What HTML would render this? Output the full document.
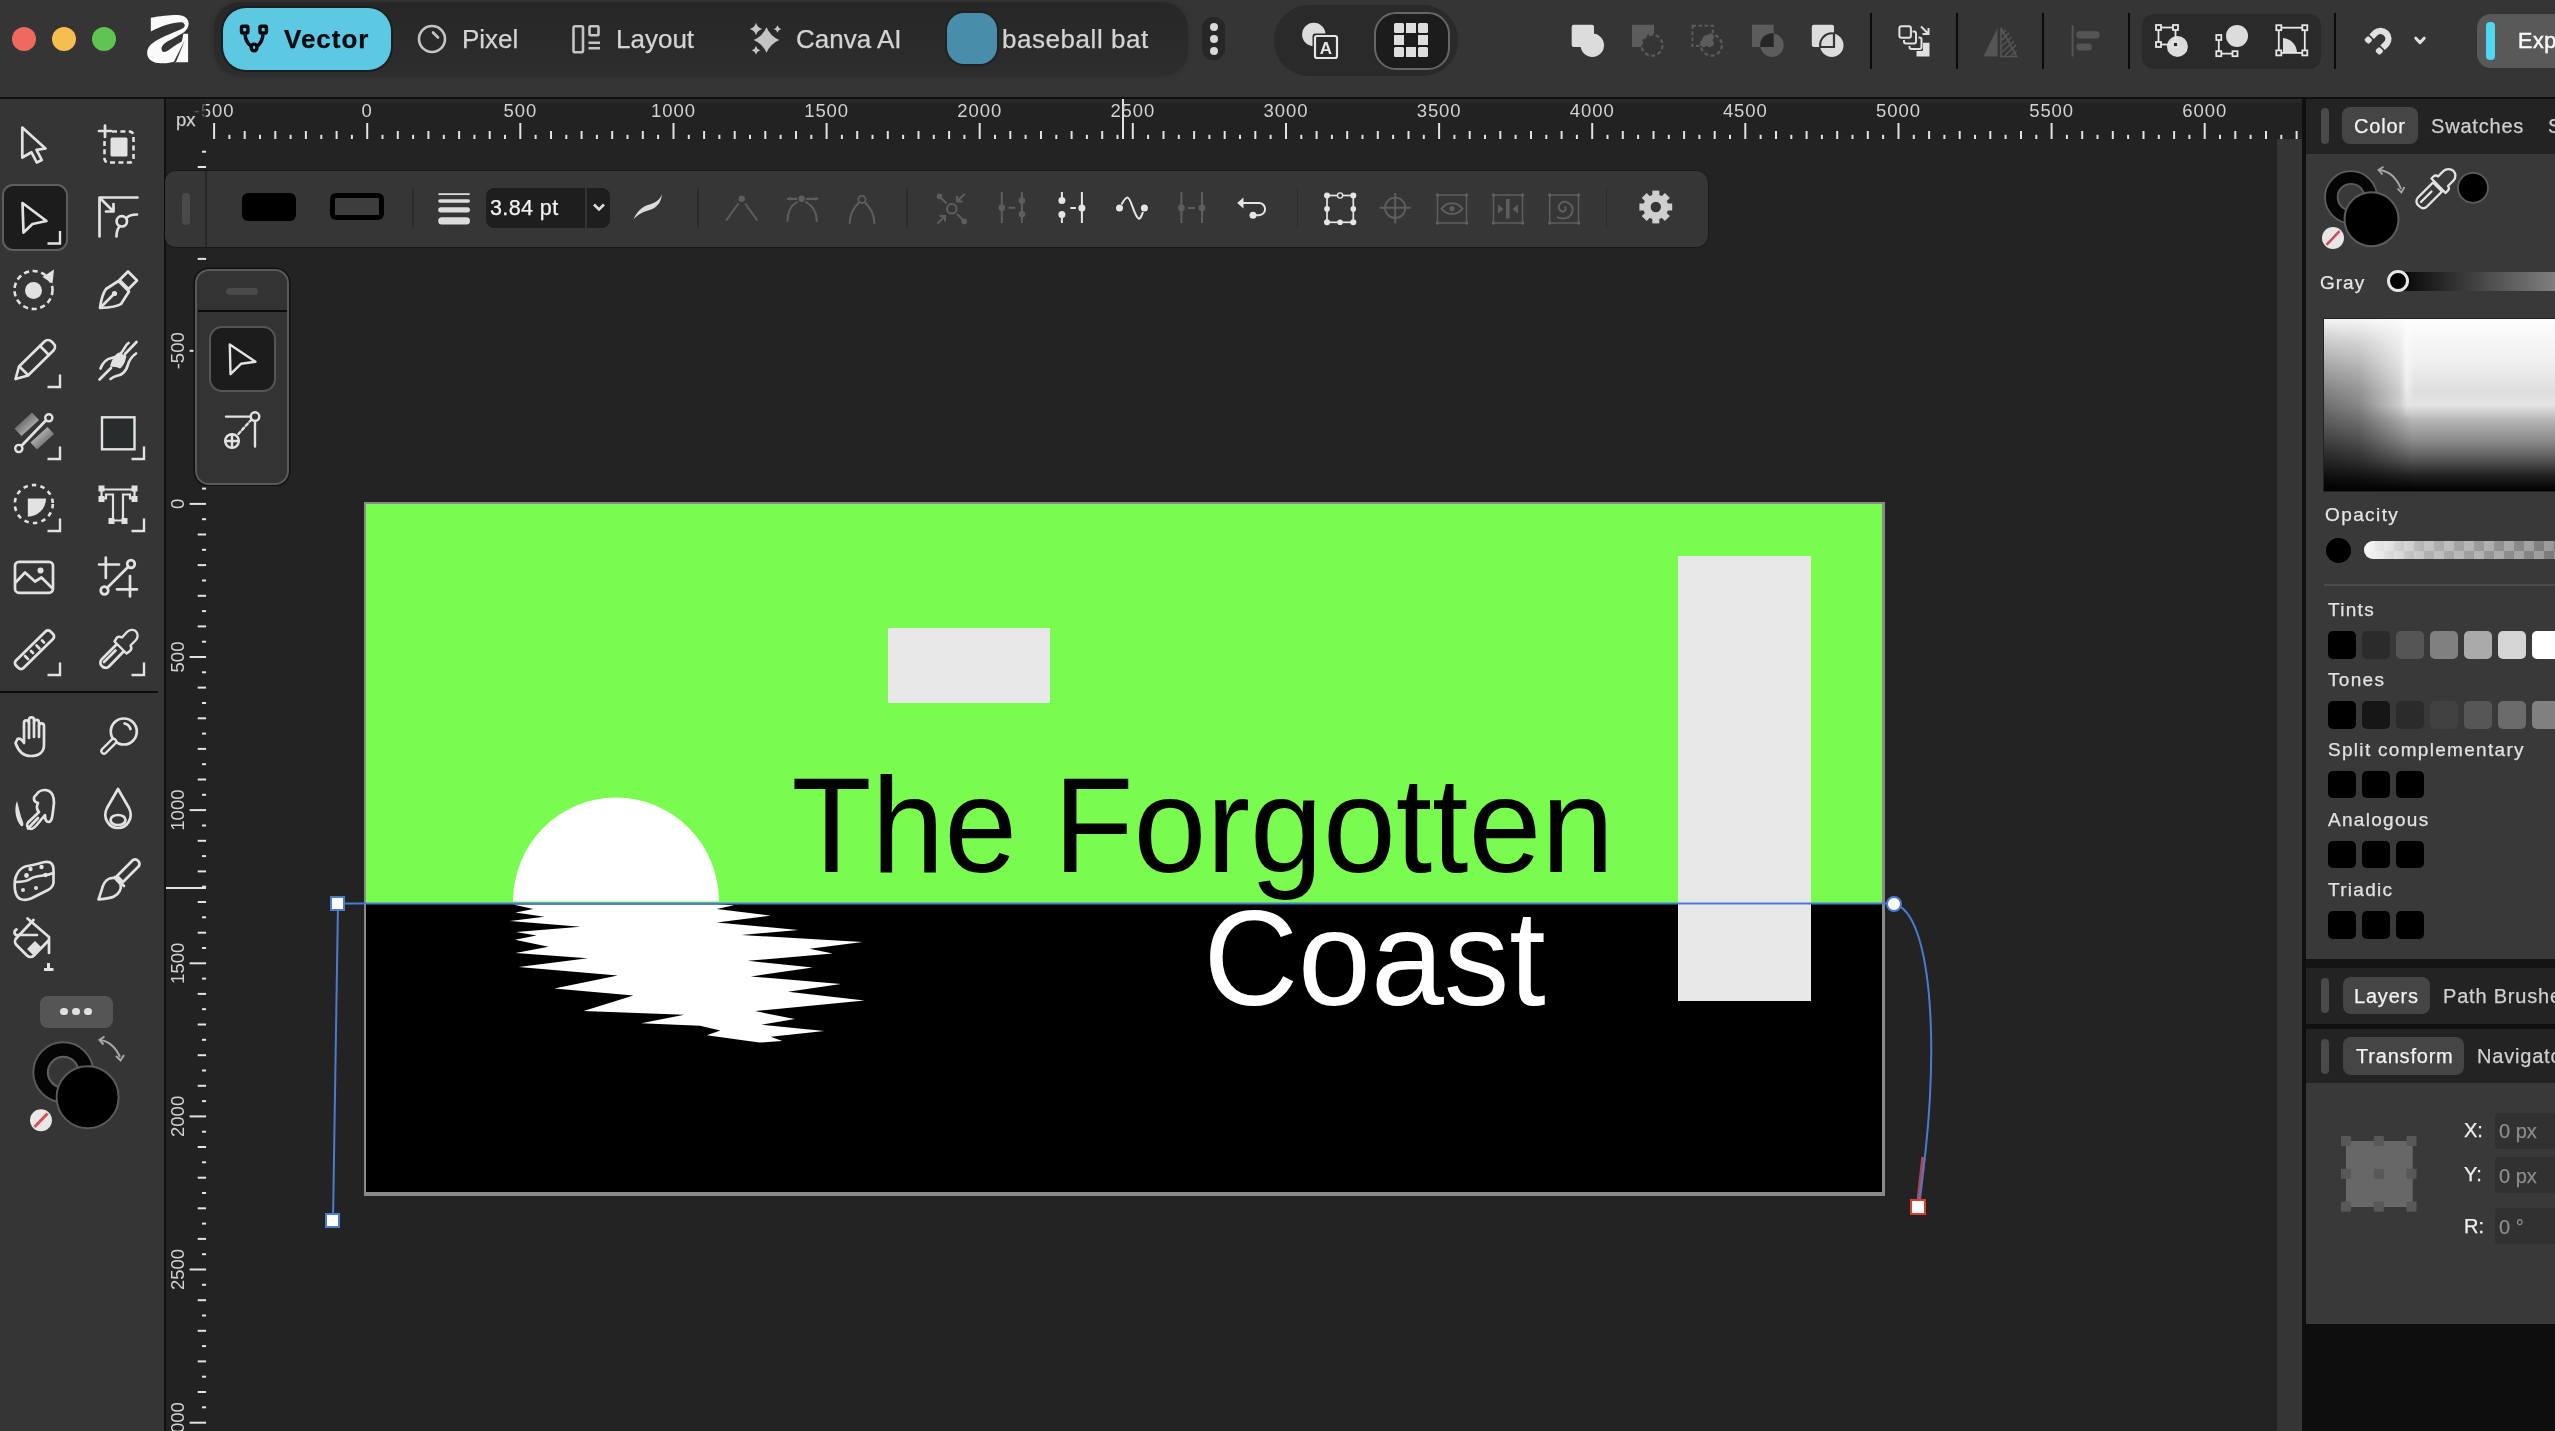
<!DOCTYPE html>
<html><head><meta charset="utf-8"><style>
*{margin:0;padding:0;box-sizing:border-box}
html,body{width:2555px;height:1431px;overflow:hidden;background:#232323;font-family:"Liberation Sans",sans-serif}
.a{position:absolute}
.t{position:absolute;white-space:nowrap;line-height:1;-webkit-text-stroke:0.25px currentColor;will-change:transform}
svg{position:absolute;overflow:visible;will-change:transform}
</style></head><body>
<div class="a" style="left:0px;top:0px;width:2555px;height:97px;background:#353535"></div>
<div class="a" style="left:0px;top:97px;width:2555px;height:2px;background:#101010"></div>
<div class="a" style="left:0px;top:99px;width:164px;height:1332px;background:#353535"></div>
<div class="a" style="left:164px;top:99px;width:2px;height:1332px;background:#111"></div>
<div class="a" style="left:166px;top:99px;width:2136px;height:42px;background:#222"></div>
<div class="a" style="left:166px;top:141px;width:44px;height:1290px;background:#222"></div>
<div class="a" style="left:214px;top:2px;width:974px;height:74px;background:linear-gradient(#272727,#2d2d2d);border-radius:26px;box-shadow:0 0 5px rgba(0,0,0,0.18)"></div>
<div class="a" style="left:12px;top:27px;width:24px;height:24px;background:#ee6a5f;border-radius:50%"></div>
<div class="a" style="left:52px;top:27px;width:24px;height:24px;background:#f5be4f;border-radius:50%"></div>
<div class="a" style="left:92px;top:27px;width:24px;height:24px;background:#5fc453;border-radius:50%"></div>
<svg style="left:140px;top:8px;" width="60" height="62" viewBox="0 0 60 62"><g transform="scale(0.04333)">
<path d="M250,225 C500,175 800,150 920,165 C1080,185 1140,300 1120,400 C1100,490 1040,545 990,575 C900,625 760,700 640,770 C540,830 480,900 500,970 C520,1040 600,1030 680,960 C800,870 920,800 1030,740 C960,900 860,1080 790,1235 C700,1270 560,1290 420,1270 C250,1250 160,1140 165,1030 C170,900 260,820 400,740 C600,630 850,540 990,470 C1060,430 1040,340 960,330 C800,320 500,400 250,545 Z" fill="#fafafa"/>
<path d="M1000,595 L1110,595 L1110,1250 L800,1250 C870,1100 950,900 1000,595 Z" fill="#fafafa"/>
<path d="M1030,740 C960,900 870,1080 790,1240 L830,1245 C900,1080 980,900 1030,740 Z" fill="#353535"/>
</g></svg>
<div class="a" style="left:221px;top:6px;width:172px;height:66px;background:#1e1e1e;border-radius:25px"></div>
<div class="a" style="left:223px;top:8px;width:168px;height:62px;background:#5cc8e2;border-radius:23px"></div>
<svg style="left:232px;top:18px;" width="48" height="42" viewBox="0 0 48 42"><g transform="translate(-232,-18)" fill="none" stroke="#0a0a10" stroke-width="3.4" stroke-linejoin="round">
<rect x="241.5" y="26.3" width="6.4" height="6.7" rx="1.2"/><rect x="260" y="26.3" width="6.4" height="6.7" rx="1.2"/>
<rect x="251.3" y="44.1" width="5.6" height="6.8" rx="2.8"/>
<path d="M245,34.5 C245.5,40 247.5,43.5 251,46 M263,34.5 C262.5,40 260.8,43.5 257.3,46"/></g></svg>
<div class="t" style="left:284px;top:26px;font-size:26px;color:#0a0a10;font-weight:bold;letter-spacing:1px">Vector</div>
<svg style="left:414px;top:21px;" width="36" height="36" viewBox="0 0 36 36"><circle cx="18" cy="18" r="13" fill="none" stroke="#c4c4c4" stroke-width="2.6"/><path d="M19,11.5 L24,16.5" stroke="#c4c4c4" stroke-width="2.6" stroke-linecap="round"/></svg>
<div class="t" style="left:462px;top:26px;font-size:26px;color:#d4d4d4;">Pixel</div>
<svg style="left:568px;top:21px;" width="36" height="36" viewBox="0 0 36 36"><g fill="none" stroke="#c4c4c4" stroke-width="2.6"><rect x="5.5" y="5.3" width="9.5" height="26" rx="1.5"/><rect x="21.5" y="5.3" width="9" height="9" rx="1"/></g><path d="M20.5,21.7 H32 M20.5,27.2 H32" stroke="#c4c4c4" stroke-width="2.6"/></svg>
<div class="t" style="left:616px;top:26px;font-size:26px;color:#d4d4d4;">Layout</div>
<svg style="left:744px;top:14px;" width="42" height="46" viewBox="0 0 42 46"><g transform="translate(-744,-14)" fill="#c4c4c4"><path d="M766.5,27.2 Q770.34,36.16 779.3,40 Q770.34,43.84 766.5,52.8 Q762.66,43.84 753.7,40 Q762.66,36.16 766.5,27.2 Z"/><path d="M756,22.8 Q757.364,27.636 762.2,29 Q757.364,30.364 756,35.2 Q754.636,30.364 749.8,29 Q754.636,27.636 756,22.8 Z"/><path d="M777.5,25.2 Q778.336,28.164 781.3,29 Q778.336,29.836 777.5,32.8 Q776.664,29.836 773.7,29 Q776.664,28.164 777.5,25.2 Z"/><path d="M756,46.0 Q756.946,49.354 760.3,50.3 Q756.946,51.245999999999995 756,54.599999999999994 Q755.054,51.245999999999995 751.7,50.3 Q755.054,49.354 756,46.0 Z"/></g></svg>
<div class="t" style="left:796px;top:26px;font-size:26px;color:#d4d4d4;">Canva AI</div>
<div class="a" style="left:945px;top:11px;width:54px;height:55px;background:#222;border-radius:19px"></div>
<div class="a" style="left:947px;top:13px;width:50px;height:51px;background:#488eaa;border-radius:17px"></div>
<div class="t" style="left:1002px;top:26px;font-size:26px;color:#d4d4d4;letter-spacing:0.55px">baseball bat</div>
<div class="a" style="left:1202px;top:17px;width:23px;height:43px;background:#272727;border-radius:11px"></div>
<div class="a" style="left:1209.6px;top:22.5px;width:8px;height:8px;background:#d8d8d8;border-radius:50%"></div>
<div class="a" style="left:1209.6px;top:34.7px;width:8px;height:8px;background:#d8d8d8;border-radius:50%"></div>
<div class="a" style="left:1209.6px;top:46.9px;width:8px;height:8px;background:#d8d8d8;border-radius:50%"></div>
<div class="a" style="left:1274px;top:5px;width:184px;height:71px;background:#2a2a2a;border-radius:35px"></div>
<svg style="left:1270px;top:0px;" width="80" height="80" viewBox="0 0 80 80"><g transform="translate(-1270,0)">
<circle cx="1313.8" cy="34.4" r="11.7" fill="#dcdcdc"/>
<rect x="1312.5" y="33.5" width="27" height="27" rx="3" fill="#2a2a2a"/>
<rect x="1315" y="36" width="22" height="22" rx="2" fill="#2a2a2a" stroke="#e6e6e6" stroke-width="2.2"/>
<text x="1326" y="54" font-family="Liberation Sans" font-size="17" font-weight="bold" fill="#e6e6e6" text-anchor="middle">A</text>
</g></svg>
<div class="a" style="left:1374px;top:12px;width:76px;height:58px;background:#1c1c1c;border:2px solid #666;border-radius:22px"></div>
<svg style="left:1390px;top:20px;" width="42" height="42" viewBox="0 0 42 42"><g transform="translate(-1390,-20)" fill="#dedede">
<rect x="1394" y="23" width="10" height="10" rx="1.5"/><rect x="1406" y="23" width="10" height="10"/><rect x="1418" y="23" width="10" height="10" rx="1.5"/>
<rect x="1394" y="35" width="10" height="10"/><rect x="1418" y="35" width="10" height="10"/>
<rect x="1394" y="47" width="10" height="10" rx="1.5"/><rect x="1406" y="47" width="10" height="10"/><rect x="1418" y="47" width="10" height="10" rx="1.5"/>
</g></svg>
<svg style="left:1560px;top:15px;" width="290" height="50" viewBox="0 0 290 50"><g transform="translate(-1560,-15)">
<rect x="1571.7" y="24.7" width="22.3" height="22.3" rx="2" fill="#dcdcdc"/><circle cx="1592.3" cy="45.2" r="11.7" fill="#dcdcdc"/>
<path d="M1632,24.7 H1654 V34 A11,11 0 0 0 1641.5,47 H1632 Z" fill="#5c5c5c"/>
<circle cx="1652" cy="45.2" r="10.5" fill="none" stroke="#5c5c5c" stroke-width="2.2" stroke-dasharray="4 2.6"/>
<rect x="1692.5" y="25.7" width="20.3" height="20.3" fill="none" stroke="#5c5c5c" stroke-width="2" stroke-dasharray="3.5 2.5"/>
<path d="M1712.8,34 V46 H1700.5 A11.5,11.5 0 0 1 1712.8,34 Z" fill="#5c5c5c"/>
<circle cx="1711.4" cy="45.2" r="10.5" fill="none" stroke="#5c5c5c" stroke-width="2.2" stroke-dasharray="4 2.6"/>
<rect x="1752" y="24.7" width="21.7" height="22.3" fill="#5c5c5c"/><circle cx="1772" cy="45.2" r="11.7" fill="#5c5c5c"/>
<path d="M1773.7,33.5 V47 H1760.3 A11.7,11.7 0 0 1 1773.7,33.5 Z" fill="#262626"/>
<rect x="1811.8" y="24.7" width="22.2" height="22.3" rx="2" fill="#dcdcdc"/><circle cx="1831.8" cy="45.2" r="11.7" fill="#dcdcdc"/>
<path d="M1820.3,47 A11.7,11.7 0 0 1 1834,33.5 V47 Z" fill="none" stroke="#353535" stroke-width="2.2"/>
</g></svg>
<div class="a" style="left:1870px;top:13px;width:2px;height:56px;background:#0a0a0a"></div>
<div class="a" style="left:1956px;top:13px;width:2px;height:56px;background:#0a0a0a"></div>
<div class="a" style="left:2042px;top:13px;width:2px;height:56px;background:#0a0a0a"></div>
<div class="a" style="left:2128px;top:13px;width:2px;height:56px;background:#0a0a0a"></div>
<div class="a" style="left:2334px;top:13px;width:2px;height:56px;background:#0a0a0a"></div>
<svg style="left:1890px;top:20px;" width="50" height="42" viewBox="0 0 50 42"><g transform="translate(-1890,-20)" fill="none" stroke="#e0e0e0" stroke-width="2">
<rect x="1899.4" y="26.3" width="11.5" height="11.5" rx="2"/>
<path d="M1912.5,31.5 h1.5 a2,2 0 0 1 2,2 v8 a2,2 0 0 1 -2,2 h-8 a2,2 0 0 1 -2,-2 v-1.5"/>
<path d="M1918.5,37.5 h1 a2,2 0 0 1 2,2 v7.5 a2,2 0 0 1 -2,2 h-8 a2,2 0 0 1 -2,-2 v-1"/>
<path d="M1921,26.5 L1928.5,34 M1928.5,28 V34 H1922.5"/>
</g>
<path d="M1916.5,56.5 H1929.5 V42.8 H1923 V49.5 A1.5,1.5 0 0 1 1921.5,51 H1916.5 Z" transform="translate(-1890,-20)" fill="#e0e0e0"/></svg>
<svg style="left:1980px;top:25px;" width="40" height="35" viewBox="0 0 40 35"><g transform="translate(-1980,-25)">
<path d="M1983.3,56.5 L1997.5,28 V56.5 Z" fill="#555"/>
<path d="M2001,28 L2016.7,56.5 H2001 Z" fill="none" stroke="#555" stroke-width="1.6"/>
<path d="M2002,34 L2006,30 M2002,40 L2009,33 M2002,46 L2011.5,37 M2002,52 L2014,41 M2005,55.5 L2016,45 M2011,55.5 L2016.5,51" stroke="#555" stroke-width="1.6"/>
</g></svg>
<svg style="left:2068px;top:22px;" width="40" height="40" viewBox="0 0 40 40"><g transform="translate(-2068,-22)" fill="#555">
<rect x="2071.6" y="25.3" width="2" height="31.2"/>
<rect x="2076.4" y="31.3" width="23.1" height="7.1" rx="3"/>
<rect x="2076.4" y="43.4" width="15.4" height="7.1" rx="3"/>
</g></svg>
<div class="a" style="left:2142px;top:14px;width:179px;height:55px;background:#2a2a2a;border-radius:12px"></div>
<svg style="left:2150px;top:18px;" width="170" height="46" viewBox="0 0 170 46"><g transform="translate(-2150,-18)">
<circle cx="2177.4" cy="46.4" r="10.5" fill="#dcdcdc"/>
<g fill="none" stroke="#e6e6e6" stroke-width="1.8">
<rect x="2158.5" y="27.5" width="17" height="17"/>
<rect x="2156" y="25" width="5" height="5" fill="#2a2a2a"/><rect x="2173" y="25" width="5" height="5" fill="#2a2a2a"/>
<rect x="2156" y="42" width="5" height="5" fill="#2a2a2a"/><rect x="2173" y="42" width="5" height="5" fill="#2a2a2a"/>
</g>
<circle cx="2237" cy="35.9" r="11" fill="#dcdcdc"/>
<g fill="none" stroke="#e6e6e6" stroke-width="1.8">
<path d="M2218.8,37.5 V53.7 H2235"/>
<rect x="2216.3" y="35" width="5" height="5" fill="#2a2a2a"/><rect x="2216.3" y="51.2" width="5" height="5" fill="#2a2a2a"/><rect x="2232.5" y="51.2" width="5" height="5" fill="#2a2a2a"/>
</g>
<path d="M2283,53 V38 A15,15 0 0 1 2297,53 Z" fill="#dcdcdc"/>
<g fill="none" stroke="#e6e6e6" stroke-width="1.8">
<rect x="2278.8" y="27.7" width="26" height="25.2"/>
<rect x="2276.3" y="25.2" width="5" height="5" fill="#2a2a2a"/><rect x="2302.3" y="25.2" width="5" height="5" fill="#2a2a2a"/>
<rect x="2276.3" y="50.4" width="5" height="5" fill="#2a2a2a"/><rect x="2302.3" y="50.4" width="5" height="5" fill="#2a2a2a"/>
</g></g></svg>
<svg style="left:2360px;top:22px;" width="70" height="36" viewBox="0 0 70 36"><g transform="translate(-2360,-22)">
<path d="M2371.6,36.7 L2375.5,32.8 A7.8,7.8 0 0 1 2386.5,43.8 L2382.6,47.7" fill="none" stroke="#e0e0e0" stroke-width="6.4" stroke-linecap="butt"/>
<rect x="-3" y="-3.2" width="6" height="6.4" rx="1.8" transform="translate(2368.3,40) rotate(-45)" fill="#e0e0e0"/>
<rect x="-3" y="-3.2" width="6" height="6.4" rx="1.8" transform="translate(2379.3,51) rotate(-45)" fill="#e0e0e0"/>
<path d="M2415.8,38.2 L2420,42.6 L2424.2,38.2" fill="none" stroke="#e0e0e0" stroke-width="3" stroke-linecap="round" stroke-linejoin="round"/>
</g></svg>
<div class="a" style="left:2477px;top:14px;width:120px;height:54px;background:#595959;border-radius:14px"></div>
<div class="a" style="left:2486px;top:22px;width:8.5px;height:38px;background:#4fd8ef;border-radius:4px"></div>
<div class="t" style="left:2517.5px;top:31px;font-size:21.5px;color:#f8f8f8;letter-spacing:0.6px;-webkit-text-stroke:0.5px #f8f8f8">Export</div>
<div class="a" style="left:166px;top:99px;width:2136px;height:4px;background:#282828"></div>
<div class="a" style="left:2277px;top:139px;width:25px;height:1292px;background:#353535"></div>
<div class="a" style="left:2302px;top:99px;width:4px;height:1332px;background:#0f0f0f"></div>
<svg style="left:0px;top:0px;" width="2555" height="145" viewBox="0 0 2555 145"><g fill="#e2e2e2"><rect x="213.1" y="123" width="2" height="16"/><rect x="228.4" y="134.8" width="2" height="4.2"/><rect x="243.7" y="131" width="2" height="8"/><rect x="259.0" y="134.8" width="2" height="4.2"/><rect x="274.3" y="131" width="2" height="8"/><rect x="289.6" y="134.8" width="2" height="4.2"/><rect x="304.9" y="131" width="2" height="8"/><rect x="320.3" y="134.8" width="2" height="4.2"/><rect x="335.6" y="131" width="2" height="8"/><rect x="350.9" y="134.8" width="2" height="4.2"/><rect x="366.2" y="123" width="2" height="16"/><rect x="381.5" y="134.8" width="2" height="4.2"/><rect x="396.8" y="131" width="2" height="8"/><rect x="412.1" y="134.8" width="2" height="4.2"/><rect x="427.4" y="131" width="2" height="8"/><rect x="442.8" y="134.8" width="2" height="4.2"/><rect x="458.1" y="131" width="2" height="8"/><rect x="473.4" y="134.8" width="2" height="4.2"/><rect x="488.7" y="131" width="2" height="8"/><rect x="504.0" y="134.8" width="2" height="4.2"/><rect x="519.3" y="123" width="2" height="16"/><rect x="534.6" y="134.8" width="2" height="4.2"/><rect x="550.0" y="131" width="2" height="8"/><rect x="565.3" y="134.8" width="2" height="4.2"/><rect x="580.6" y="131" width="2" height="8"/><rect x="595.9" y="134.8" width="2" height="4.2"/><rect x="611.2" y="131" width="2" height="8"/><rect x="626.5" y="134.8" width="2" height="4.2"/><rect x="641.8" y="131" width="2" height="8"/><rect x="657.1" y="134.8" width="2" height="4.2"/><rect x="672.5" y="123" width="2" height="16"/><rect x="687.8" y="134.8" width="2" height="4.2"/><rect x="703.1" y="131" width="2" height="8"/><rect x="718.4" y="134.8" width="2" height="4.2"/><rect x="733.7" y="131" width="2" height="8"/><rect x="749.0" y="134.8" width="2" height="4.2"/><rect x="764.3" y="131" width="2" height="8"/><rect x="779.6" y="134.8" width="2" height="4.2"/><rect x="795.0" y="131" width="2" height="8"/><rect x="810.3" y="134.8" width="2" height="4.2"/><rect x="825.6" y="123" width="2" height="16"/><rect x="840.9" y="134.8" width="2" height="4.2"/><rect x="856.2" y="131" width="2" height="8"/><rect x="871.5" y="134.8" width="2" height="4.2"/><rect x="886.8" y="131" width="2" height="8"/><rect x="902.1" y="134.8" width="2" height="4.2"/><rect x="917.5" y="131" width="2" height="8"/><rect x="932.8" y="134.8" width="2" height="4.2"/><rect x="948.1" y="131" width="2" height="8"/><rect x="963.4" y="134.8" width="2" height="4.2"/><rect x="978.7" y="123" width="2" height="16"/><rect x="994.0" y="134.8" width="2" height="4.2"/><rect x="1009.3" y="131" width="2" height="8"/><rect x="1024.6" y="134.8" width="2" height="4.2"/><rect x="1040.0" y="131" width="2" height="8"/><rect x="1055.3" y="134.8" width="2" height="4.2"/><rect x="1070.6" y="131" width="2" height="8"/><rect x="1085.9" y="134.8" width="2" height="4.2"/><rect x="1101.2" y="131" width="2" height="8"/><rect x="1116.5" y="134.8" width="2" height="4.2"/><rect x="1131.8" y="123" width="2" height="16"/><rect x="1147.1" y="134.8" width="2" height="4.2"/><rect x="1162.5" y="131" width="2" height="8"/><rect x="1177.8" y="134.8" width="2" height="4.2"/><rect x="1193.1" y="131" width="2" height="8"/><rect x="1208.4" y="134.8" width="2" height="4.2"/><rect x="1223.7" y="131" width="2" height="8"/><rect x="1239.0" y="134.8" width="2" height="4.2"/><rect x="1254.3" y="131" width="2" height="8"/><rect x="1269.6" y="134.8" width="2" height="4.2"/><rect x="1285.0" y="123" width="2" height="16"/><rect x="1300.3" y="134.8" width="2" height="4.2"/><rect x="1315.6" y="131" width="2" height="8"/><rect x="1330.9" y="134.8" width="2" height="4.2"/><rect x="1346.2" y="131" width="2" height="8"/><rect x="1361.5" y="134.8" width="2" height="4.2"/><rect x="1376.8" y="131" width="2" height="8"/><rect x="1392.1" y="134.8" width="2" height="4.2"/><rect x="1407.5" y="131" width="2" height="8"/><rect x="1422.8" y="134.8" width="2" height="4.2"/><rect x="1438.1" y="123" width="2" height="16"/><rect x="1453.4" y="134.8" width="2" height="4.2"/><rect x="1468.7" y="131" width="2" height="8"/><rect x="1484.0" y="134.8" width="2" height="4.2"/><rect x="1499.3" y="131" width="2" height="8"/><rect x="1514.6" y="134.8" width="2" height="4.2"/><rect x="1530.0" y="131" width="2" height="8"/><rect x="1545.3" y="134.8" width="2" height="4.2"/><rect x="1560.6" y="131" width="2" height="8"/><rect x="1575.9" y="134.8" width="2" height="4.2"/><rect x="1591.2" y="123" width="2" height="16"/><rect x="1606.5" y="134.8" width="2" height="4.2"/><rect x="1621.8" y="131" width="2" height="8"/><rect x="1637.1" y="134.8" width="2" height="4.2"/><rect x="1652.5" y="131" width="2" height="8"/><rect x="1667.8" y="134.8" width="2" height="4.2"/><rect x="1683.1" y="131" width="2" height="8"/><rect x="1698.4" y="134.8" width="2" height="4.2"/><rect x="1713.7" y="131" width="2" height="8"/><rect x="1729.0" y="134.8" width="2" height="4.2"/><rect x="1744.3" y="123" width="2" height="16"/><rect x="1759.6" y="134.8" width="2" height="4.2"/><rect x="1775.0" y="131" width="2" height="8"/><rect x="1790.3" y="134.8" width="2" height="4.2"/><rect x="1805.6" y="131" width="2" height="8"/><rect x="1820.9" y="134.8" width="2" height="4.2"/><rect x="1836.2" y="131" width="2" height="8"/><rect x="1851.5" y="134.8" width="2" height="4.2"/><rect x="1866.8" y="131" width="2" height="8"/><rect x="1882.1" y="134.8" width="2" height="4.2"/><rect x="1897.5" y="123" width="2" height="16"/><rect x="1912.8" y="134.8" width="2" height="4.2"/><rect x="1928.1" y="131" width="2" height="8"/><rect x="1943.4" y="134.8" width="2" height="4.2"/><rect x="1958.7" y="131" width="2" height="8"/><rect x="1974.0" y="134.8" width="2" height="4.2"/><rect x="1989.3" y="131" width="2" height="8"/><rect x="2004.6" y="134.8" width="2" height="4.2"/><rect x="2020.0" y="131" width="2" height="8"/><rect x="2035.3" y="134.8" width="2" height="4.2"/><rect x="2050.6" y="123" width="2" height="16"/><rect x="2065.9" y="134.8" width="2" height="4.2"/><rect x="2081.2" y="131" width="2" height="8"/><rect x="2096.5" y="134.8" width="2" height="4.2"/><rect x="2111.8" y="131" width="2" height="8"/><rect x="2127.1" y="134.8" width="2" height="4.2"/><rect x="2142.5" y="131" width="2" height="8"/><rect x="2157.8" y="134.8" width="2" height="4.2"/><rect x="2173.1" y="131" width="2" height="8"/><rect x="2188.4" y="134.8" width="2" height="4.2"/><rect x="2203.7" y="123" width="2" height="16"/><rect x="2219.0" y="134.8" width="2" height="4.2"/><rect x="2234.3" y="131" width="2" height="8"/><rect x="2249.6" y="134.8" width="2" height="4.2"/><rect x="2265.0" y="131" width="2" height="8"/><rect x="2280.3" y="134.8" width="2" height="4.2"/><rect x="2295.6" y="131" width="2" height="8"/><rect x="1122" y="99" width="2" height="40"/></g><g font-family="Liberation Sans" font-size="18.5" fill="#d2d2d2" letter-spacing="0.9"><text x="214.1" y="117.3" text-anchor="middle">-500</text><text x="367.2" y="117.3" text-anchor="middle">0</text><text x="520.3" y="117.3" text-anchor="middle">500</text><text x="673.5" y="117.3" text-anchor="middle">1000</text><text x="826.6" y="117.3" text-anchor="middle">1500</text><text x="979.7" y="117.3" text-anchor="middle">2000</text><text x="1132.8" y="117.3" text-anchor="middle">2500</text><text x="1286.0" y="117.3" text-anchor="middle">3000</text><text x="1439.1" y="117.3" text-anchor="middle">3500</text><text x="1592.2" y="117.3" text-anchor="middle">4000</text><text x="1745.3" y="117.3" text-anchor="middle">4500</text><text x="1898.5" y="117.3" text-anchor="middle">5000</text><text x="2051.6" y="117.3" text-anchor="middle">5500</text><text x="2204.7" y="117.3" text-anchor="middle">6000</text></g></svg>
<svg style="left:0px;top:0px;" width="260" height="1431" viewBox="0 0 260 1431"><g fill="#e2e2e2"><rect x="202" y="150.7" width="4.1" height="2"/><rect x="197.7" y="166.0" width="8.4" height="2"/><rect x="202" y="181.3" width="4.1" height="2"/><rect x="189.6" y="196.6" width="16.5" height="2"/><rect x="202" y="212.0" width="4.1" height="2"/><rect x="197.7" y="227.3" width="8.4" height="2"/><rect x="202" y="242.6" width="4.1" height="2"/><rect x="197.7" y="257.9" width="8.4" height="2"/><rect x="202" y="273.2" width="4.1" height="2"/><rect x="197.7" y="288.5" width="8.4" height="2"/><rect x="202" y="303.8" width="4.1" height="2"/><rect x="197.7" y="319.1" width="8.4" height="2"/><rect x="202" y="334.5" width="4.1" height="2"/><rect x="189.6" y="349.8" width="16.5" height="2"/><rect x="202" y="365.1" width="4.1" height="2"/><rect x="197.7" y="380.4" width="8.4" height="2"/><rect x="202" y="395.7" width="4.1" height="2"/><rect x="197.7" y="411.0" width="8.4" height="2"/><rect x="202" y="426.3" width="4.1" height="2"/><rect x="197.7" y="441.6" width="8.4" height="2"/><rect x="202" y="457.0" width="4.1" height="2"/><rect x="197.7" y="472.3" width="8.4" height="2"/><rect x="202" y="487.6" width="4.1" height="2"/><rect x="189.6" y="502.9" width="16.5" height="2"/><rect x="202" y="518.2" width="4.1" height="2"/><rect x="197.7" y="533.5" width="8.4" height="2"/><rect x="202" y="548.8" width="4.1" height="2"/><rect x="197.7" y="564.1" width="8.4" height="2"/><rect x="202" y="579.5" width="4.1" height="2"/><rect x="197.7" y="594.8" width="8.4" height="2"/><rect x="202" y="610.1" width="4.1" height="2"/><rect x="197.7" y="625.4" width="8.4" height="2"/><rect x="202" y="640.7" width="4.1" height="2"/><rect x="189.6" y="656.0" width="16.5" height="2"/><rect x="202" y="671.3" width="4.1" height="2"/><rect x="197.7" y="686.6" width="8.4" height="2"/><rect x="202" y="702.0" width="4.1" height="2"/><rect x="197.7" y="717.3" width="8.4" height="2"/><rect x="202" y="732.6" width="4.1" height="2"/><rect x="197.7" y="747.9" width="8.4" height="2"/><rect x="202" y="763.2" width="4.1" height="2"/><rect x="197.7" y="778.5" width="8.4" height="2"/><rect x="202" y="793.8" width="4.1" height="2"/><rect x="189.6" y="809.1" width="16.5" height="2"/><rect x="202" y="824.5" width="4.1" height="2"/><rect x="197.7" y="839.8" width="8.4" height="2"/><rect x="202" y="855.1" width="4.1" height="2"/><rect x="197.7" y="870.4" width="8.4" height="2"/><rect x="202" y="885.7" width="4.1" height="2"/><rect x="197.7" y="901.0" width="8.4" height="2"/><rect x="202" y="916.3" width="4.1" height="2"/><rect x="197.7" y="931.7" width="8.4" height="2"/><rect x="202" y="947.0" width="4.1" height="2"/><rect x="189.6" y="962.3" width="16.5" height="2"/><rect x="202" y="977.6" width="4.1" height="2"/><rect x="197.7" y="992.9" width="8.4" height="2"/><rect x="202" y="1008.2" width="4.1" height="2"/><rect x="197.7" y="1023.5" width="8.4" height="2"/><rect x="202" y="1038.8" width="4.1" height="2"/><rect x="197.7" y="1054.2" width="8.4" height="2"/><rect x="202" y="1069.5" width="4.1" height="2"/><rect x="197.7" y="1084.8" width="8.4" height="2"/><rect x="202" y="1100.1" width="4.1" height="2"/><rect x="189.6" y="1115.4" width="16.5" height="2"/><rect x="202" y="1130.7" width="4.1" height="2"/><rect x="197.7" y="1146.0" width="8.4" height="2"/><rect x="202" y="1161.3" width="4.1" height="2"/><rect x="197.7" y="1176.7" width="8.4" height="2"/><rect x="202" y="1192.0" width="4.1" height="2"/><rect x="197.7" y="1207.3" width="8.4" height="2"/><rect x="202" y="1222.6" width="4.1" height="2"/><rect x="197.7" y="1237.9" width="8.4" height="2"/><rect x="202" y="1253.2" width="4.1" height="2"/><rect x="189.6" y="1268.5" width="16.5" height="2"/><rect x="202" y="1283.8" width="4.1" height="2"/><rect x="197.7" y="1299.2" width="8.4" height="2"/><rect x="202" y="1314.5" width="4.1" height="2"/><rect x="197.7" y="1329.8" width="8.4" height="2"/><rect x="202" y="1345.1" width="4.1" height="2"/><rect x="197.7" y="1360.4" width="8.4" height="2"/><rect x="202" y="1375.7" width="4.1" height="2"/><rect x="197.7" y="1391.0" width="8.4" height="2"/><rect x="202" y="1406.3" width="4.1" height="2"/><rect x="189.6" y="1421.7" width="16.5" height="2"/><rect x="166" y="887" width="40" height="2"/></g><g font-family="Liberation Sans" font-size="18.5" fill="#d2d2d2"><text x="0" y="0" transform="translate(184.3,197.6) rotate(-90)" text-anchor="middle">-1000</text><text x="0" y="0" transform="translate(184.3,350.8) rotate(-90)" text-anchor="middle">-500</text><text x="0" y="0" transform="translate(184.3,503.9) rotate(-90)" text-anchor="middle">0</text><text x="0" y="0" transform="translate(184.3,657.0) rotate(-90)" text-anchor="middle">500</text><text x="0" y="0" transform="translate(184.3,810.1) rotate(-90)" text-anchor="middle">1000</text><text x="0" y="0" transform="translate(184.3,963.3) rotate(-90)" text-anchor="middle">1500</text><text x="0" y="0" transform="translate(184.3,1116.4) rotate(-90)" text-anchor="middle">2000</text><text x="0" y="0" transform="translate(184.3,1269.5) rotate(-90)" text-anchor="middle">2500</text><text x="0" y="0" transform="translate(184.3,1422.7) rotate(-90)" text-anchor="middle">3000</text></g></svg>
<div class="a" style="left:166px;top:99px;width:40px;height:42px;background:rgba(34,34,34,0.72)"></div>
<div class="t" style="left:176px;top:111px;font-size:18.5px;color:#cfcfcf;">px</div>
<div class="a" style="left:1.5px;top:183.8px;width:66.2px;height:67px;background:#1c1c1c;border:2px solid #5e5e5e;border-radius:11px"></div>
<div class="a" style="left:0px;top:690.5px;width:158px;height:2px;background:#0c0c0c"></div>
<svg style="left:0px;top:99px;" width="165" height="1332" viewBox="0 0 165 1332"><g transform="translate(0,-99)">
<defs>
<linearGradient id="gr1" x1="0" y1="0" x2="1" y2="1"><stop offset="0" stop-color="#e2e2e2" stop-opacity="0"/><stop offset="1" stop-color="#e2e2e2"/></linearGradient>
<linearGradient id="gr2" x1="1" y1="1" x2="0" y2="0"><stop offset="0" stop-color="#e2e2e2" stop-opacity="0.1"/><stop offset="1" stop-color="#e2e2e2"/></linearGradient>
</defs>
<!-- move -->
<path d="M22.3,127.5 L45.5,148.5 L36.5,149.8 L41.8,160 L36.8,162.5 L31.5,152.3 L22.3,157.5 Z" fill="none" stroke="#e2e2e2" stroke-width="2.7" stroke-linecap="round" stroke-linejoin="round"/>
<!-- artboard -->
<path d="M112,131.5 H129.5 A4,4 0 0 1 133.5,135.5 V158.5 A4,4 0 0 1 129.5,162.5 H108.5 A4,4 0 0 1 104.5,158.5 V141" fill="none" stroke="#e2e2e2" stroke-width="2.6" stroke-dasharray="5 3.4"/>
<rect x="110.5" y="137.5" width="17" height="19" rx="1.5" fill="#e2e2e2"/>
<path d="M99,131 H111 M105,125.5 V137" fill="none" stroke="#e2e2e2" stroke-width="2.7" stroke-linecap="round" stroke-linejoin="round"/>
<!-- node -->
<path d="M22.5,203 L46.5,221 L32.5,224 L23.5,232.5 Z" fill="none" stroke="#e2e2e2" stroke-width="2.7" stroke-linecap="round" stroke-linejoin="round"/>
<path d="M47.5,243.5 H60.0 V231" fill="none" stroke="#e2e2e2" stroke-width="2.4"/>
<!-- corner tool -->
<path d="M99.5,236.5 V197.5 H137.5" fill="none" stroke="#e2e2e2" stroke-width="2.7" stroke-linecap="round" stroke-linejoin="round"/>
<path d="M101,199 L113.5,211.5 M113.5,204 V211.5 H106" fill="none" stroke="#e2e2e2" stroke-width="2.7" stroke-linecap="round" stroke-linejoin="round"/>
<circle cx="121.8" cy="221.3" r="5.2" fill="none" stroke="#e2e2e2" stroke-width="2.7" stroke-linecap="round" stroke-linejoin="round"/>
<path d="M126.5,218 C129,215 132,214.5 137,214.5 M119.5,226.5 C117.5,229 116.5,232 116.5,236.5" fill="none" stroke="#e2e2e2" stroke-width="2.7" stroke-linecap="round" stroke-linejoin="round"/>
<!-- point transform -->
<circle cx="33.5" cy="290" r="19" fill="none" stroke="#e2e2e2" stroke-width="2.6" stroke-dasharray="5.2 3.6"/>
<circle cx="33.5" cy="290.5" r="8.5" fill="#e2e2e2"/>
<path d="M42.5,277 L54,269.5 L52.5,283.5 Z" fill="#e2e2e2"/>
<!-- pen -->
<path d="M100,308 C101,300 103.5,292.5 106,289 L118.5,281 L129,291.5 L121,304 C117.5,306.5 110,307.5 100,308 Z" fill="none" stroke="#e2e2e2" stroke-width="2.7" stroke-linecap="round" stroke-linejoin="round"/>
<path d="M100.5,307.5 L113.5,294.5" fill="none" stroke="#e2e2e2" stroke-width="2.7" stroke-linecap="round" stroke-linejoin="round"/><circle cx="114.5" cy="293.5" r="2.6" fill="#e2e2e2"/>
<path d="M119.5,280 L128,271.5 L137,280.5 L128.5,289 Z" fill="none" stroke="#e2e2e2" stroke-width="2.7" stroke-linecap="round" stroke-linejoin="round"/>
<!-- pencil -->
<path d="M15.5,379 L19,366.5 L44.5,341.5 A5,5 0 0 1 51.5,341.5 L53.5,343.5 A5,5 0 0 1 53.5,350.5 L28,375.5 Z" fill="none" stroke="#e2e2e2" stroke-width="2.7" stroke-linecap="round" stroke-linejoin="round"/>
<path d="M19.5,366.5 L28,375 M40,346 L48.5,354.5" fill="none" stroke="#e2e2e2" stroke-width="2.7" stroke-linecap="round" stroke-linejoin="round"/>
<path d="M47.5,387.0 H60.0 V374.5" fill="none" stroke="#e2e2e2" stroke-width="2.4"/>
<!-- vector brush -->
<path d="M99.5,379.5 L111,368 M125,354 L136.5,342" fill="none" stroke="#e2e2e2" stroke-width="2.7" stroke-linecap="round" stroke-linejoin="round"/>
<path d="M100.5,368.5 C103,362 106,359 111.5,358 C118,357 122,353 124.5,348 C126,345 127,344 128.5,343" fill="none" stroke="#e2e2e2" stroke-width="2.7" stroke-linecap="round" stroke-linejoin="round"/>
<path d="M110.5,379 C113,377 116,376 118,375.5 C122,375 126,371 127.5,366 C129,360 131,357 136,353.5" fill="none" stroke="#e2e2e2" stroke-width="2.7" stroke-linecap="round" stroke-linejoin="round"/>
<path d="M118.5,352.5 C122,354.5 126,355 126.5,356 C125.5,360 124.5,365.5 120,368.5 C117,366.5 113,367 110,366.5 C111.5,361.5 113,356 118.5,352.5 Z" fill="#e2e2e2"/>
<!-- gradient -->
<path d="M14.5,428.5 L32,412.5 L39,420 L21.5,436 Z" fill="url(#gr1)" transform="rotate(0)"/>
<path d="M30.5,442.5 L47.5,427 L54,434 L37,449.5 Z" fill="url(#gr2)"/>
<path d="M21.3,446 L46.3,420" fill="none" stroke="#e2e2e2" stroke-width="2.7" stroke-linecap="round" stroke-linejoin="round"/>
<circle cx="18.8" cy="448.5" r="3.6" fill="#353535" stroke="#e2e2e2" stroke-width="2.4"/>
<circle cx="48.8" cy="417.8" r="3.6" fill="#353535" stroke="#e2e2e2" stroke-width="2.4"/>
<path d="M47.5,459.0 H60.0 V446.5" fill="none" stroke="#e2e2e2" stroke-width="2.4"/>
<!-- rectangle -->
<rect x="102" y="417.3" width="32.5" height="32" fill="#272b2b" stroke="#e2e2e2" stroke-width="2.4"/>
<path d="M131.5,459.0 H144.0 V446.5" fill="none" stroke="#e2e2e2" stroke-width="2.4"/>
<!-- ellipse/quarter dashed -->
<circle cx="33.8" cy="504" r="19" fill="none" stroke="#e2e2e2" stroke-width="2.6" stroke-dasharray="4.5 4.2"/>
<path d="M27.8,498.5 H46 A18.2,18.2 0 0 1 27.8,516.7 Z" fill="#e2e2e2"/>
<path d="M47.5,531.0 H60.0 V518.5" fill="none" stroke="#e2e2e2" stroke-width="2.4"/>
<!-- frame text -->
<path d="M101.5,489.5 H134.5 V498.5 H130 V494.5 H123 V520.5 H113 V494.5 H106 V498.5 H101.5 Z" fill="none" stroke="#e2e2e2" stroke-width="2.2"/>
<g fill="#e2e2e2"><rect x="98.5" y="485.5" width="6" height="6"/><rect x="131.5" y="485.5" width="6" height="6"/><rect x="98.5" y="496" width="6" height="6"/><rect x="131.5" y="496" width="6" height="6"/><rect x="108.5" y="518" width="6" height="6"/><rect x="121.5" y="518" width="6" height="6"/></g>
<path d="M131.5,531.0 H144.0 V518.5" fill="none" stroke="#e2e2e2" stroke-width="2.4"/>
<!-- image -->
<rect x="15" y="561.8" width="38" height="31" rx="4" fill="none" stroke="#e2e2e2" stroke-width="2.7" stroke-linecap="round" stroke-linejoin="round"/>
<path d="M16,582 L25,572.5 L35,581.5 L41.5,577.5 L52,588" fill="none" stroke="#e2e2e2" stroke-width="2.7" stroke-linecap="round" stroke-linejoin="round"/>
<circle cx="40.5" cy="570.5" r="3" fill="#e2e2e2"/>
<!-- slice -->
<path d="M99,564.5 H119 M105.8,557.5 V578 M117,589.3 H137 M130,576 V596.5 M107,588 L128.5,566.5" fill="none" stroke="#e2e2e2" stroke-width="2.7" stroke-linecap="round" stroke-linejoin="round"/>
<circle cx="104.5" cy="590.5" r="3.8" fill="none" stroke="#e2e2e2" stroke-width="2.7" stroke-linecap="round" stroke-linejoin="round"/>
<circle cx="131" cy="564" r="3.8" fill="none" stroke="#e2e2e2" stroke-width="2.7" stroke-linecap="round" stroke-linejoin="round"/>
<!-- ruler -->
<path d="M16,660.5 L45.5,631.5 A3.5,3.5 0 0 1 50.5,631.5 L53,634 A3.5,3.5 0 0 1 53,639 L23.5,668 A3.5,3.5 0 0 1 18.5,668 L16,665.5 A3.5,3.5 0 0 1 16,660.5 Z" fill="none" stroke="#e2e2e2" stroke-width="2.7" stroke-linecap="round" stroke-linejoin="round"/>
<path d="M25,656 L28,659 M31,651 L33,653 M36.5,645.5 L39.5,648.5 M42,640.5 L44,642.5" fill="none" stroke="#e2e2e2" stroke-width="2.7" stroke-linecap="round" stroke-linejoin="round"/>
<path d="M47.5,675.0 H60.0 V662.5" fill="none" stroke="#e2e2e2" stroke-width="2.4"/>
<!-- eyedropper -->
<path d="M103,667 C100,665 99.5,662 101.5,659.5 L118,643" fill="none" stroke="#e2e2e2" stroke-width="2.7" stroke-linecap="round" stroke-linejoin="round"/>
<path d="M103,667 C105,668 107.5,668 109,666.5 L125,650" fill="none" stroke="#e2e2e2" stroke-width="2.7" stroke-linecap="round" stroke-linejoin="round"/>
<path d="M104,662 L115.5,650.5" fill="none" stroke="#e2e2e2" stroke-width="2.7" stroke-linecap="round" stroke-linejoin="round"/>
<path d="M114.5,641.5 L117,637.5 C119,636 121,637 122,637.5 L127,632 C129.5,629.5 134,629 136,631.5 C138.5,634 138,638 135.5,640.5 L130.5,645.5 C131.5,647 132,649 130,651 L126.5,653.5 Z" fill="#353535" stroke="#e2e2e2" stroke-width="2.4" stroke-linejoin="round"/>
<path d="M131.5,675.0 H144.0 V662.5" fill="none" stroke="#e2e2e2" stroke-width="2.4"/>
<!-- hand -->
<path d="M30.5,756 C22,756 18,750 15.5,743 L17.5,739 C19.5,738 22,739 24,743 V723 C24,719.5 28.5,719.5 29,723 V720 C29,716.5 34,716.5 34,720 V722.5 C34,719 39,719 39,722.5 V726 C39,722.5 44,722.5 44,726 L44,745 C44,752 39,756 30.5,756 Z" fill="none" stroke="#e2e2e2" stroke-width="2.7" stroke-linecap="round" stroke-linejoin="round"/>
<path d="M29,723 V738 M34,722.5 V737 M39,726 V737" fill="none" stroke="#e2e2e2" stroke-width="2.7" stroke-linecap="round" stroke-linejoin="round"/>
<!-- zoom -->
<circle cx="123.8" cy="731.5" r="13" fill="none" stroke="#e2e2e2" stroke-width="2.7" stroke-linecap="round" stroke-linejoin="round"/>
<path d="M113.5,741.5 L104,751" fill="none" stroke="#e2e2e2" stroke-width="7.5" stroke-linecap="round"/>
<path d="M113.5,741.5 L104,751" fill="none" stroke="#353535" stroke-width="3" stroke-linecap="round"/>
<path d="M124.5,723.5 C127,724 129.5,726 130.5,729" fill="none" stroke="#e2e2e2" stroke-width="2.7" stroke-linecap="round" stroke-linejoin="round"/>
<!-- smudge -->
<path d="M17,801 C14,808 15,819 21,826 C23,827 24,825 23,822 C20,815 19,808 17,801 Z" fill="#e2e2e2"/>
<path d="M28,828.5 L38,818 M31,829 C27,828 26,825 28,822.5 L39,812 C36,809 37,805 38,803 C33,802 33,797 36,795 C39,790.5 44,789 49,791 C53,793 54,798 54,803 L52.5,815 C52,819 51,822 48.5,822 C45.5,822 45,818 45,815 L40,821 C37,825 34,829 31,829 Z" fill="none" stroke="#e2e2e2" stroke-width="2.7" stroke-linecap="round" stroke-linejoin="round"/>
<!-- blur -->
<path d="M118,789 L129,808 C134,818 127,828 118,828 C109,828 102,818 107,808 Z" fill="none" stroke="#e2e2e2" stroke-width="2.7" stroke-linecap="round" stroke-linejoin="round"/>
<ellipse cx="118" cy="820" rx="7.5" ry="5" fill="none" stroke="#e2e2e2" stroke-width="2.7" stroke-linecap="round" stroke-linejoin="round"/>
<!-- sponge -->
<path d="M16.5,875 C14,880 14,891 17,896 C20,900.5 26,900.5 31,898.5 L48,890 C53,887.5 54,884 53.5,880 V870 C53.5,865 51.5,861 45,862 C40,863 36,864.5 30,865.5 C24,866 19,869 16.5,875 Z" fill="none" stroke="#e2e2e2" stroke-width="2.7" stroke-linecap="round" stroke-linejoin="round"/>
<path d="M16,882 C21,882 26,882 31,878.5 C37,874.5 44,877 53.5,873" fill="none" stroke="#e2e2e2" stroke-width="2.7" stroke-linecap="round" stroke-linejoin="round"/>
<g fill="#e2e2e2"><circle cx="30.5" cy="869" r="2.2"/><circle cx="41.5" cy="867" r="2.2"/><circle cx="26.5" cy="875.5" r="2.4"/><circle cx="45.5" cy="875" r="2.2"/><circle cx="23" cy="890" r="2"/><circle cx="36" cy="888" r="2"/></g>
<!-- brush -->
<path d="M117,876 L133,860 A4.5,4.5 0 0 1 139,866 L123,882 Z" fill="none" stroke="#e2e2e2" stroke-width="2.7" stroke-linecap="round" stroke-linejoin="round"/>
<path d="M115,877 L124,886" fill="none" stroke="#e2e2e2" stroke-width="2.7" stroke-linecap="round" stroke-linejoin="round"/>
<path d="M115,878 C108,877 104,882 102.5,887 C101.5,891 100,895 98.5,899.5 C104,899 110,898.5 114,896.5 C118.5,894.5 122,889 120.5,884 Z" fill="none" stroke="#e2e2e2" stroke-width="2.7" stroke-linecap="round" stroke-linejoin="round"/>
<!-- fill -->
<path d="M27.5,918.5 L49,937 V953 M16.5,938 C14.5,940 14.5,943 16.5,945 L27,955.5 C29,957.5 32,957.5 34,955.5 L48,941" fill="none" stroke="#e2e2e2" stroke-width="2.7" stroke-linecap="round" stroke-linejoin="round"/>
<path d="M16.5,938 L33.5,920 M16.5,929.5 C13.5,931 14,935 17,935 L37,935" fill="none" stroke="#e2e2e2" stroke-width="2.7" stroke-linecap="round" stroke-linejoin="round"/>
<path d="M27,949 L35,941 L41,947 L33,955 Z" fill="#e2e2e2"/>
<path d="M44,969.5 H53.5 M48.5,963 V969.5" fill="none" stroke="#e2e2e2" stroke-width="3"/>
<!-- swap arrows & wells -->
</g></svg>
<div class="a" style="left:39.5px;top:996px;width:73.5px;height:32px;background:#555;border-radius:8px"></div>
<div class="a" style="left:60.2px;top:1007.7px;width:7.6px;height:7.6px;background:#e0e0e0;border-radius:50%"></div>
<div class="a" style="left:72.2px;top:1007.7px;width:7.6px;height:7.6px;background:#e0e0e0;border-radius:50%"></div>
<div class="a" style="left:84.2px;top:1007.7px;width:7.6px;height:7.6px;background:#e0e0e0;border-radius:50%"></div>
<svg style="left:0px;top:1000px;" width="165" height="160" viewBox="0 0 165 160"><g transform="translate(0,-1000)">
<circle cx="63.3" cy="1072.3" r="30" fill="#050505" stroke="#5a5a5a" stroke-width="2"/>
<circle cx="63.3" cy="1072.3" r="15.5" fill="#3a3a3a" stroke="#606060" stroke-width="2"/>
<circle cx="63.3" cy="1072.3" r="13" fill="#353535"/>
<circle cx="87.6" cy="1097.2" r="31" fill="#000" stroke="#5a5a5a" stroke-width="2"/>
<path d="M100,1040 C108,1041 115,1046 120,1057" fill="none" stroke="#a8a8a8" stroke-width="2"/>
<path d="M104.5,1036.5 L99.5,1040 L103.5,1044.5 M116,1056 L120.5,1060.5 L124,1055" fill="none" stroke="#a8a8a8" stroke-width="2"/>
<circle cx="41" cy="1120.2" r="11" fill="#e8e8e8"/>
<path d="M34.5,1127 L47.5,1113.5" stroke="#d9534f" stroke-width="3"/>
</g></svg>
<div class="a" style="left:364px;top:502px;width:1521px;height:694px;background:#8a8a8a"></div>
<div class="a" style="left:366px;top:504px;width:1516px;height:400px;background:#7afb4f"></div>
<div class="a" style="left:366px;top:904px;width:1516px;height:288px;background:#000"></div>
<svg style="left:0px;top:0px;" width="2555" height="1431" viewBox="0 0 2555 1431">
  <rect x="888" y="628" width="162" height="75" fill="#e8e8e8"/>
  <path d="M513,901.5 A103,104 0 0 1 719,901.5 Z" fill="#fff"/>
  <path d="M513,904.5 L533.3,908.9 L515.5,912.6 L544.3,916.8 L509.2,921 L580.5,926.7 L516,932 L536.5,935.6 L515,939.8 L548.5,946.7 L515.5,953 L587.8,958.2 L518.6,967.1 L617.7,975.5 L554.3,988.6 L633.4,995.4 L583.6,1011.1 L684.3,1014.8 L641.3,1023.2 L700,1025.8 L720.4,1030.5 L706.8,1035.2 L759.2,1042.6 L782.3,1041 L770.7,1036.8 L824.2,1031 L761.3,1024.8 L794.8,1019 L755,1011.1 L864.5,1000.6 L788,991.7 L841,983.9 L750.8,976.5 L812.7,967.6 L747.7,960.8 L832.6,953.5 L809.5,948.7 L862.5,941.9 L741.4,935.1 L798.5,929.9 L716.7,922.5 L770.7,915.7 L716.7,908.9 L734,905.2 L719,904.5 Z" fill="#fff"/>
  <text x="791.5" y="872.5" font-family="Liberation Sans" font-size="131" fill="#000" transform="translate(0,872.5) scale(1,1.033) translate(0,-872.5)">The Forgotten</text>
  <text x="1203.5" y="1005" font-family="Liberation Sans" font-size="131" fill="#fff" transform="translate(0,1005) scale(1,1.04) translate(0,-1005)">Coast</text>
  <rect x="1678" y="556" width="133" height="445" fill="#e8e8e8"/>
  <line x1="338" y1="903.5" x2="1894" y2="903.5" stroke="#4a7bd0" stroke-width="2"/>
  <line x1="338" y1="904" x2="333" y2="1221" stroke="#4a7bd0" stroke-width="2"/>
  <line x1="1918" y1="1207" x2="1923.5" y2="1157" stroke="#c84a5a" stroke-width="4.5" opacity="0.85"/>
  <path d="M1894,904 C1933,912 1942,1060 1918,1207" fill="none" stroke="#4a7bd0" stroke-width="2"/>
  <rect x="331" y="897" width="13" height="13" fill="#fff" stroke="#4a7bd0" stroke-width="2"/>
  <rect x="326" y="1214" width="13" height="13" fill="#fff" stroke="#4a7bd0" stroke-width="2"/>
  <circle cx="1894" cy="904" r="7" fill="#fff" stroke="#4a7bd0" stroke-width="2"/>
    <rect x="1911" y="1200" width="14" height="14" fill="#fff" stroke="#e03a2a" stroke-width="2"/>
</svg>
<div class="a" style="left:165px;top:171.3px;width:1543px;height:75.5px;background:#363636;border-radius:10px 12px 12px 10px;box-shadow:0 0 0 1px rgba(0,0,0,0.25)"></div>
<div class="a" style="left:182px;top:193.2px;width:8px;height:32px;background:#4a4a4a;border-radius:4px"></div>
<div class="a" style="left:205.3px;top:171.3px;width:1.8px;height:75.5px;background:#272727"></div>
<div class="a" style="left:242px;top:192.8px;width:54px;height:28px;background:#000;border-radius:6px"></div>
<div class="a" style="left:330.4px;top:193.4px;width:53.6px;height:26.8px;background:#3d3d3d;border:5.5px solid #000;border-radius:6px"></div>
<div class="a" style="left:412.1px;top:188px;width:1.8px;height:40px;background:#2b2b2b"></div>
<div class="a" style="left:696.8000000000001px;top:188px;width:1.8px;height:40px;background:#2b2b2b"></div>
<div class="a" style="left:906.3000000000001px;top:188px;width:1.8px;height:40px;background:#2b2b2b"></div>
<div class="a" style="left:1296.5px;top:188px;width:1.8px;height:40px;background:#2b2b2b"></div>
<div class="a" style="left:1605.6px;top:188px;width:1.8px;height:40px;background:#2b2b2b"></div>
<svg style="left:430px;top:185px;" width="50" height="45" viewBox="0 0 50 45"><g transform="translate(-430,-185)" fill="#dcdcdc">
<rect x="438.2" y="193.2" width="31.8" height="1.8" rx="0.9"/>
<rect x="438.2" y="199.2" width="31.8" height="3.6" rx="1.8"/>
<rect x="438.2" y="207.2" width="31.8" height="5.2" rx="2.6"/>
<rect x="438.2" y="217.3" width="31.8" height="7.3" rx="3.6"/>
</g></svg>
<div class="a" style="left:485.8px;top:188.2px;width:124.2px;height:39.4px;background:#1e1e1e;border-radius:8px"></div>
<div class="a" style="left:585px;top:188.2px;width:2px;height:39.4px;background:#333"></div>
<div class="t" style="left:489.5px;top:197.5px;font-size:21.5px;color:#f4f4f4;letter-spacing:0.4px">3.84 pt</div>
<svg style="left:590px;top:200px;" width="20" height="14" viewBox="0 0 20 14"><path d="M4,4.5 L9,9.5 L14,4.5" fill="none" stroke="#dcdcdc" stroke-width="2.6"/></svg>
<svg style="left:630px;top:190px;" width="36" height="34" viewBox="0 0 36 34"><g transform="translate(-630,-190)"><path d="M633.5,219.3 C638,209 645,205.5 651,204 C656,202.5 660.5,199 662,194 C661.5,201 658,207 651,209.5 C645,211.5 639,213 633.5,219.3 Z" fill="#dcdcdc"/></g></svg>
<svg style="left:0px;top:0px;" width="1720" height="260" viewBox="0 0 1720 260">
<!-- sharp -->
<circle cx="741.7" cy="198.8" r="3.2" fill="#5e5e5e"/>
<path d="M738,204 L726.5,220 M745.5,204 L757,220" stroke="#5e5e5e" stroke-width="2" stroke-linecap="round"/>
<!-- smooth -->
<circle cx="801.6" cy="198.8" r="3.2" fill="#5e5e5e"/>
<path d="M787,198.8 H797 M806,198.8 H817" stroke="#5e5e5e" stroke-width="2.2"/>
<path d="M788,198.8 L791,196.5 V201 Z M815.5,196.5 L818.5,198.8 L815.5,201 Z" fill="#5e5e5e"/>
<path d="M797,202 C790,206 787.5,213 787.5,221 M806,202 C813,206 816.8,213 816.8,221" fill="none" stroke="#5e5e5e" stroke-width="2" stroke-linecap="round"/>
<!-- auto smooth -->
<circle cx="862" cy="199.4" r="3.6" fill="none" stroke="#5e5e5e" stroke-width="1.8"/>
<path d="M859,202.5 C853,208 850,215 849.7,223 M865,202.5 C871,208 874,215 874.4,223" fill="none" stroke="#5e5e5e" stroke-width="2" stroke-linecap="round"/>
<!-- break -->
<circle cx="951.8" cy="208.8" r="4.8" fill="none" stroke="#5e5e5e" stroke-width="2"/>
<circle cx="939.5" cy="196.4" r="2.8" fill="#5e5e5e"/><circle cx="964.2" cy="221.4" r="2.8" fill="#5e5e5e"/>
<path d="M941,198 L946.5,203.5 M957,214 L962.5,219.5" stroke="#5e5e5e" stroke-width="1.8"/>
<path d="M964.5,194 L957,201.5 M957,196 V201.5 H962.5 M937.5,223.5 L945,216 M945,221.5 V216 H939.5" fill="none" stroke="#5e5e5e" stroke-width="2"/>
<!-- split dim -->
<g stroke="#5e5e5e" stroke-width="2"><path d="M1001.8,192 V223 M1021.9,192 V223 M1008.5,207.7 H1015.2"/></g>
<g fill="#5e5e5e"><circle cx="1001.8" cy="207.7" r="3.3"/><circle cx="1021.9" cy="200.6" r="3.3"/><circle cx="1021.9" cy="214.2" r="3.3"/></g>
<!-- join bright -->
<g stroke="#e6e6e6" stroke-width="2"><path d="M1061.9,192 V200 M1061.9,215 V223 M1081.9,192 V223 M1070.4,207.9 H1075.9"/></g>
<g fill="#e6e6e6"><circle cx="1061.9" cy="200.6" r="3.5"/><circle cx="1061.9" cy="214.6" r="3.5"/><circle cx="1081.9" cy="207.9" r="3.5"/></g>
<!-- wave -->
<path d="M1121.5,204.5 C1124,200 1126,197.5 1127.5,197.5 C1131,197.5 1134,216 1138.5,218.5 C1140.5,219.5 1142,214.5 1143,212" fill="none" stroke="#e6e6e6" stroke-width="2"/>
<circle cx="1119.5" cy="207.9" r="3.5" fill="#e6e6e6"/><circle cx="1144.4" cy="207.9" r="3.5" fill="#e6e6e6"/>
<!-- split dim 2 -->
<g stroke="#5e5e5e" stroke-width="2"><path d="M1181.4,192 V223 M1202,192 V223 M1188,207.9 H1195"/></g>
<g fill="#5e5e5e"><circle cx="1181.4" cy="207.9" r="3.3"/><circle cx="1202" cy="207.9" r="3.3"/></g>
<!-- reverse -->
<path d="M1237.2,203 L1243.5,197.5 V208.5 Z" fill="#e6e6e6"/>
<path d="M1243,203 H1259 A6.1,6.1 0 0 1 1259,215.2 H1256" fill="none" stroke="#e6e6e6" stroke-width="2"/>
<circle cx="1253" cy="215.2" r="3.5" fill="#e6e6e6"/>
<!-- bbox bright -->
<rect x="1327" y="195.5" width="26.3" height="26.8" fill="none" stroke="#e6e6e6" stroke-width="1.7"/>
<g fill="#e6e6e6"><circle cx="1327" cy="195.5" r="3"/><circle cx="1353.3" cy="195.5" r="3"/><circle cx="1327" cy="222.3" r="3"/><circle cx="1353.3" cy="222.3" r="3"/>
<circle cx="1327" cy="208.9" r="2.8"/><circle cx="1353.3" cy="208.9" r="2.8"/><circle cx="1340.1" cy="222.3" r="2.8"/></g>
<circle cx="1340.1" cy="195.5" r="2.6" fill="#363636" stroke="#e6e6e6" stroke-width="1.3"/>
<!-- target dim -->
<circle cx="1395.2" cy="207.8" r="10.2" fill="none" stroke="#5e5e5e" stroke-width="1.9"/>
<path d="M1379.6,207.8 H1410.8 M1395.2,193 V223.4" stroke="#5e5e5e" stroke-width="1.9"/>
<!-- eye box -->
<g fill="none" stroke="#5e5e5e" stroke-width="1.5"><rect x="1437.5" y="195" width="29" height="28"/><rect x="1507.8" y="195" width="0" height="0"/></g>
<g fill="#5e5e5e"><circle cx="1437.5" cy="195" r="1.8"/><circle cx="1466.5" cy="195" r="1.8"/><circle cx="1437.5" cy="223" r="1.8"/><circle cx="1466.5" cy="223" r="1.8"/></g>
<path d="M1441.5,208.6 C1447,201.5 1457,201.5 1462.5,208.6 C1457,215.7 1447,215.7 1441.5,208.6 Z" fill="none" stroke="#5e5e5e" stroke-width="2"/>
<circle cx="1452" cy="208.6" r="2.6" fill="#5e5e5e"/>
<!-- mirror box -->
<g fill="none" stroke="#5e5e5e" stroke-width="1.5"><rect x="1493.5" y="195" width="29" height="28"/></g>
<g fill="#5e5e5e"><circle cx="1493.5" cy="195" r="1.8"/><circle cx="1522.5" cy="195" r="1.8"/><circle cx="1493.5" cy="223" r="1.8"/><circle cx="1522.5" cy="223" r="1.8"/>
<rect x="1506" y="199" width="3.6" height="19.5"/><path d="M1498,204.5 L1503.5,209 L1498,213.5 Z M1518,204.5 L1512.5,209 L1518,213.5 Z"/></g>
<!-- rotate box -->
<g fill="none" stroke="#5e5e5e" stroke-width="1.5"><rect x="1549.7" y="195" width="28.8" height="28"/></g>
<g fill="#5e5e5e"><circle cx="1549.7" cy="195" r="1.8"/><circle cx="1578.5" cy="195" r="1.8"/><circle cx="1549.7" cy="223" r="1.8"/><circle cx="1578.5" cy="223" r="1.8"/></g>
<path d="M1557,217 C1562,220 1571,219 1572.5,211 C1573.5,203.5 1565,200 1561,203 C1557,206 1559,212 1563.5,211.5 C1566.5,211 1566,207 1564.5,206.5" fill="none" stroke="#5e5e5e" stroke-width="2"/>
</svg>
<svg style="left:1630px;top:180px;" width="52" height="52" viewBox="0 0 52 52"><g transform="translate(-1630,-180)" fill="#cfcfcf"><rect x="1652.3" y="190.6" width="7" height="6" transform="rotate(0 1655.8 207)"/><rect x="1652.3" y="190.6" width="7" height="6" transform="rotate(45 1655.8 207)"/><rect x="1652.3" y="190.6" width="7" height="6" transform="rotate(90 1655.8 207)"/><rect x="1652.3" y="190.6" width="7" height="6" transform="rotate(135 1655.8 207)"/><rect x="1652.3" y="190.6" width="7" height="6" transform="rotate(180 1655.8 207)"/><rect x="1652.3" y="190.6" width="7" height="6" transform="rotate(225 1655.8 207)"/><rect x="1652.3" y="190.6" width="7" height="6" transform="rotate(270 1655.8 207)"/><rect x="1652.3" y="190.6" width="7" height="6" transform="rotate(315 1655.8 207)"/><circle cx="1655.8" cy="207" r="12.5"/></g><circle cx="25.8" cy="27" r="5.2" fill="#363636"/></svg>
<div class="a" style="left:194.8px;top:269px;width:94.6px;height:215.5px;background:#333;border:2px solid #595959;border-radius:14px;box-shadow:0 0 0 1.5px #111"></div>
<div class="a" style="left:226px;top:287.7px;width:32px;height:7.3px;background:#4a4a4a;border-radius:3.5px"></div>
<div class="a" style="left:197.5px;top:309.6px;width:89px;height:2.2px;background:#0a0a0a"></div>
<div class="a" style="left:208.6px;top:325.5px;width:67px;height:66.8px;background:#1c1c1c;border:2px solid #555;border-radius:13px"></div>
<svg style="left:200px;top:330px;" width="90" height="130" viewBox="0 0 90 130"><g transform="translate(-200,-330)" fill="none" stroke="#e2e2e2" stroke-width="2.4" stroke-linejoin="round" stroke-linecap="round">
<path d="M229.8,344.5 L255.5,361.8 L241,363.8 L230.5,374.2 Z"/>
<path d="M226,416.6 H250.5 M255,421 V446.5"/>
<circle cx="255" cy="416.6" r="4.3"/>
<path d="M251.5,419.5 L237.5,435" stroke-dasharray="3 2.5"/>
<circle cx="232" cy="441" r="6.8"/>
<path d="M232,434.2 V447.8 M225.2,441 H238.8"/>
</g></svg>
<div class="a" style="left:2306px;top:99px;width:249px;height:55px;background:#232323"></div>
<div class="a" style="left:2321.2px;top:108.4px;width:7.8px;height:35.3px;background:#4a4a4a;border-radius:4px"></div>
<div class="a" style="left:2342.4px;top:106.8px;width:75.6px;height:37.7px;background:#454545;border-radius:8px"></div>
<div class="t" style="left:2354px;top:116px;font-size:20px;color:#f2f2f2;letter-spacing:0.8px">Color</div>
<div class="t" style="left:2430.5px;top:116px;font-size:20px;color:#cfcfcf;letter-spacing:0.8px">Swatches</div>
<div class="t" style="left:2548px;top:116px;font-size:20px;color:#cfcfcf;">S</div>
<div class="a" style="left:2306px;top:154px;width:249px;height:804.6px;background:#393939"></div>
<svg style="left:2300px;top:150px;" width="255" height="110" viewBox="0 0 255 110"><g transform="translate(-2300,-150)">
<circle cx="2351" cy="197.2" r="26" fill="#040404" stroke="#5d5d5d" stroke-width="1.8"/>
<circle cx="2351" cy="197.2" r="13.4" fill="#3b3b3b" stroke="#5d5d5d" stroke-width="1.8"/>
<circle cx="2351" cy="197.2" r="11" fill="#393939"/>
<circle cx="2371.5" cy="219.2" r="27" fill="#000" stroke="#5d5d5d" stroke-width="2"/>
<path d="M2379.5,170 C2388,171 2396,176.5 2401,189" fill="none" stroke="#a8a8a8" stroke-width="1.8"/>
<path d="M2383.5,166.8 L2378.5,170 L2382.5,174.5 M2397.5,188.5 L2401.3,192.5 L2404.5,187" fill="none" stroke="#a8a8a8" stroke-width="1.8"/>
<circle cx="2333" cy="238" r="11" fill="#e6e6e6"/>
<path d="M2326.5,244.8 L2339.5,231.2" stroke="#d04a58" stroke-width="2.6"/>
<g fill="#393939" stroke="#e2e2e2" stroke-width="2.4" stroke-linejoin="round" stroke-linecap="round">
<path d="M2419,206 C2416,204 2415.5,200 2418,197.5 L2433,182.5 L2442,191.5 L2427,206.5 C2424.5,209 2421.5,208.5 2419,206 Z"/>
<path d="M2421,202 L2431.5,191.5" fill="none"/>
<path d="M2431.5,178.5 L2434,176 C2435.5,175 2437,175.5 2438,176.5 L2443.5,171 C2446,168.5 2451,168.5 2453.5,171 C2456,173.5 2456,178 2453.5,180.5 L2448,186 C2449,187 2449.5,189 2448,190.5 L2445.5,193 Z"/>
</g>
<circle cx="2473" cy="187.8" r="15" fill="#000" stroke="#5d5d5d" stroke-width="1.8"/>
</g></svg>
<div class="t" style="left:2320.4px;top:273px;font-size:19px;color:#e6e6e6;letter-spacing:1px">Gray</div>
<div class="a" style="left:2397px;top:272px;width:170px;height:19px;background:linear-gradient(to right,#000 0%,#111 10%,#555 60%,#888 100%);border-radius:9px 0 0 9px"></div>
<div class="a" style="left:2386.5px;top:270.3px;width:22px;height:22px;background:#000;border:3px solid #e8e8e8;border-radius:50%"></div>
<div class="a" style="left:2322.6px;top:317.6px;width:240px;height:174px;background:#222"></div>
<div class="a" style="left:2323.6px;top:318.6px;width:240px;height:172px;background:linear-gradient(#fdfdfd 0%,#f0f0f0 25%,#dedede 42%,#e4e4e4 50%,#b5b5b5 59%,#8a8a8a 71%,#555 82%,#222 91%,#000 100%)"></div>
<div class="a" style="left:2323.6px;top:318.6px;width:88px;height:172px;background:linear-gradient(#f4f4f4 0%,#c8c8c8 14%,#9a9a9a 32%,#7a7a7a 45%,#555 62%,#2e2e2e 78%,#0a0a0a 94%,#000 100%);-webkit-mask-image:linear-gradient(to right,#000 0%,rgba(0,0,0,0.8) 40%,transparent 100%)"></div>
<div class="a" style="left:2400px;top:318.6px;width:14px;height:100px;background:linear-gradient(to right,rgba(255,255,255,0),rgba(255,255,255,0.55),rgba(255,255,255,0));-webkit-mask-image:linear-gradient(#000 70%,transparent 100%)"></div>
<div class="t" style="left:2325px;top:505px;font-size:19px;color:#e6e6e6;letter-spacing:1.4px">Opacity</div>
<div class="a" style="left:2326.2px;top:538px;width:25.2px;height:25.2px;background:#000;border-radius:50%"></div>
<div class="a" style="left:2364px;top:541px;width:200px;height:18px;background-color:#8a8a8a;background-image:linear-gradient(45deg,#666 25%,transparent 25%,transparent 75%,#666 75%),linear-gradient(45deg,#666 25%,transparent 25%,transparent 75%,#666 75%);background-size:20px 20px;background-position:0 0,10px 10px;border-radius:9px 0 0 9px"></div>
<div class="a" style="left:2364px;top:541px;width:200px;height:18px;background:linear-gradient(to right,rgba(255,255,255,0.95) 0%,rgba(255,255,255,0.5) 30%,rgba(255,255,255,0.1) 100%);border-radius:9px 0 0 9px"></div>
<div class="a" style="left:2324px;top:584.2px;width:240px;height:2px;background:#4c4c4c"></div>
<div class="t" style="left:2328.4px;top:600px;font-size:19px;color:#e2e2e2;letter-spacing:1.3px">Tints</div>
<div class="a" style="left:2328.4px;top:631.4px;width:27.5px;height:27.5px;background:#000;border-radius:5px"></div>
<div class="a" style="left:2362.4px;top:631.4px;width:27.5px;height:27.5px;background:#2b2b2b;border-radius:5px"></div>
<div class="a" style="left:2396.4px;top:631.4px;width:27.5px;height:27.5px;background:#555;border-radius:5px"></div>
<div class="a" style="left:2430.4px;top:631.4px;width:27.5px;height:27.5px;background:#808080;border-radius:5px"></div>
<div class="a" style="left:2464.4px;top:631.4px;width:27.5px;height:27.5px;background:#aaa;border-radius:5px"></div>
<div class="a" style="left:2498.4px;top:631.4px;width:27.5px;height:27.5px;background:#d5d5d5;border-radius:5px"></div>
<div class="a" style="left:2532.4px;top:631.4px;width:27.5px;height:27.5px;background:#fff;border-radius:5px"></div>
<div class="t" style="left:2328.4px;top:670px;font-size:19px;color:#e2e2e2;letter-spacing:1.3px">Tones</div>
<div class="a" style="left:2328.4px;top:701px;width:27.5px;height:27.5px;background:#000;border-radius:5px"></div>
<div class="a" style="left:2362.4px;top:701px;width:27.5px;height:27.5px;background:#161616;border-radius:5px"></div>
<div class="a" style="left:2396.4px;top:701px;width:27.5px;height:27.5px;background:#2b2b2b;border-radius:5px"></div>
<div class="a" style="left:2430.4px;top:701px;width:27.5px;height:27.5px;background:#414141;border-radius:5px"></div>
<div class="a" style="left:2464.4px;top:701px;width:27.5px;height:27.5px;background:#565656;border-radius:5px"></div>
<div class="a" style="left:2498.4px;top:701px;width:27.5px;height:27.5px;background:#6b6b6b;border-radius:5px"></div>
<div class="a" style="left:2532.4px;top:701px;width:27.5px;height:27.5px;background:#808080;border-radius:5px"></div>
<div class="t" style="left:2328.4px;top:740px;font-size:19px;color:#e2e2e2;letter-spacing:1.3px">Split complementary</div>
<div class="a" style="left:2328.4px;top:770.8px;width:27.5px;height:27.5px;background:#000;border-radius:5px"></div>
<div class="a" style="left:2362.4px;top:770.8px;width:27.5px;height:27.5px;background:#000;border-radius:5px"></div>
<div class="a" style="left:2396.4px;top:770.8px;width:27.5px;height:27.5px;background:#000;border-radius:5px"></div>
<div class="t" style="left:2328.4px;top:810px;font-size:19px;color:#e2e2e2;letter-spacing:1.3px">Analogous</div>
<div class="a" style="left:2328.4px;top:840.6px;width:27.5px;height:27.5px;background:#000;border-radius:5px"></div>
<div class="a" style="left:2362.4px;top:840.6px;width:27.5px;height:27.5px;background:#000;border-radius:5px"></div>
<div class="a" style="left:2396.4px;top:840.6px;width:27.5px;height:27.5px;background:#000;border-radius:5px"></div>
<div class="t" style="left:2328.4px;top:880px;font-size:19px;color:#e2e2e2;letter-spacing:1.3px">Triadic</div>
<div class="a" style="left:2328.4px;top:911px;width:27.5px;height:27.5px;background:#000;border-radius:5px"></div>
<div class="a" style="left:2362.4px;top:911px;width:27.5px;height:27.5px;background:#000;border-radius:5px"></div>
<div class="a" style="left:2396.4px;top:911px;width:27.5px;height:27.5px;background:#000;border-radius:5px"></div>
<div class="a" style="left:2306px;top:958.6px;width:249px;height:10px;background:#141414"></div>
<div class="a" style="left:2306px;top:968px;width:249px;height:56px;background:#232323"></div>
<div class="a" style="left:2321px;top:978px;width:8.3px;height:34.6px;background:#4a4a4a;border-radius:4px"></div>
<div class="a" style="left:2342.5px;top:977px;width:87.2px;height:37.3px;background:#454545;border-radius:8px"></div>
<div class="t" style="left:2354px;top:986px;font-size:20px;color:#f2f2f2;letter-spacing:0.8px">Layers</div>
<div class="t" style="left:2442.8px;top:986px;font-size:20px;color:#cfcfcf;letter-spacing:0.8px">Path Brushes</div>
<div class="a" style="left:2306px;top:1024px;width:249px;height:5px;background:#111"></div>
<div class="a" style="left:2306px;top:1029px;width:249px;height:54px;background:#232323"></div>
<div class="a" style="left:2321px;top:1039px;width:8.3px;height:34.5px;background:#4a4a4a;border-radius:4px"></div>
<div class="a" style="left:2342.5px;top:1037px;width:121px;height:38px;background:#454545;border-radius:8px"></div>
<div class="t" style="left:2355.6px;top:1046px;font-size:20px;color:#f2f2f2;letter-spacing:0.8px">Transform</div>
<div class="t" style="left:2476.7px;top:1046px;font-size:20px;color:#cfcfcf;letter-spacing:0.8px">Navigator</div>
<div class="a" style="left:2306px;top:1083px;width:249px;height:240.5px;background:#393939"></div>
<div class="a" style="left:2306px;top:1323.5px;width:249px;height:108px;background:#0e0e0e"></div>
<svg style="left:2335px;top:1130px;" width="90" height="90" viewBox="0 0 90 90"><g transform="translate(-2335,-1130)">
<rect x="2346" y="1141" width="66.7" height="66" fill="#676767"/>
<g fill="#585858">
<rect x="2341" y="1136" width="10" height="10"/><rect x="2373.8" y="1136" width="10" height="10"/><rect x="2406.5" y="1136" width="10" height="10"/>
<rect x="2341" y="1168.8" width="10" height="10"/><rect x="2373.8" y="1168.8" width="10" height="10"/><rect x="2406.5" y="1168.8" width="10" height="10"/>
<rect x="2341" y="1201.6" width="10" height="10"/><rect x="2373.8" y="1201.6" width="10" height="10"/><rect x="2406.5" y="1201.6" width="10" height="10"/>
</g></g></svg>
<div class="a" style="left:2495px;top:1113px;width:70px;height:36px;background:#313131;border-radius:4px 0 0 4px"></div>
<div class="t" style="left:2464px;top:1120px;font-size:20px;color:#f0f0f0;">X:</div>
<div class="a" style="left:2495px;top:1157.4px;width:70px;height:36px;background:#313131;border-radius:4px 0 0 4px"></div>
<div class="t" style="left:2464px;top:1164px;font-size:20px;color:#f0f0f0;">Y:</div>
<div class="a" style="left:2495px;top:1208px;width:70px;height:36px;background:#313131;border-radius:4px 0 0 4px"></div>
<div class="t" style="left:2464px;top:1216px;font-size:20px;color:#f0f0f0;">R:</div>
<div class="t" style="left:2498.7px;top:1121px;font-size:20px;color:#8c8c8c;">0 px</div>
<div class="t" style="left:2498.7px;top:1165.5px;font-size:20px;color:#8c8c8c;">0 px</div>
<div class="t" style="left:2498.7px;top:1217px;font-size:20px;color:#8c8c8c;">0 °</div>
</body></html>
